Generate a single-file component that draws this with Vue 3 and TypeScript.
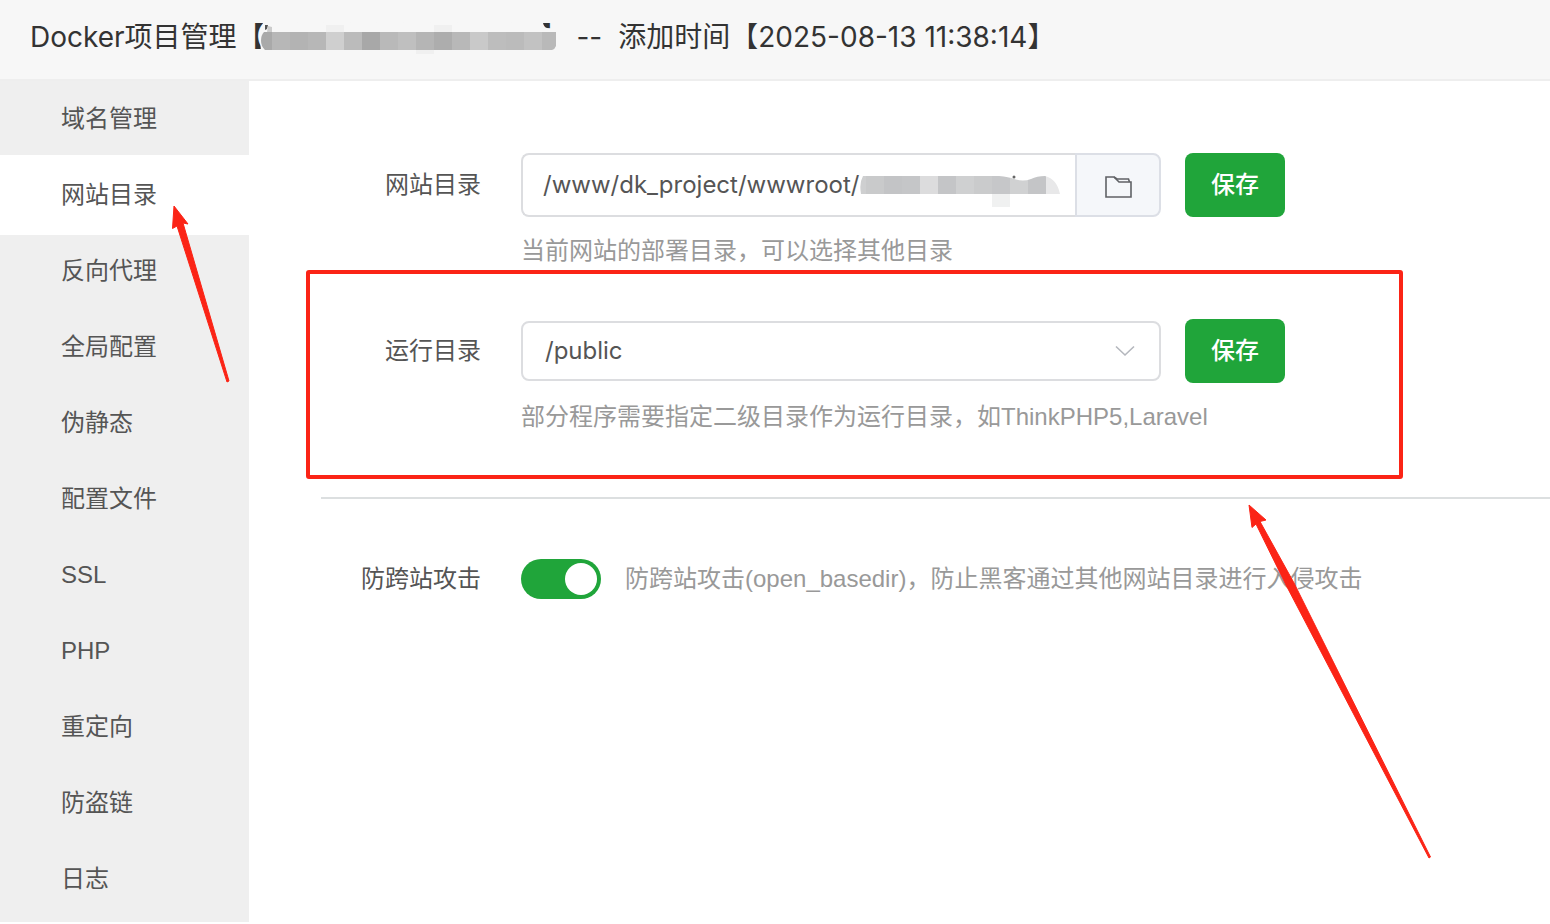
<script setup lang="ts">
import { ref } from 'vue'

interface Block {
  x: number
  w: number
  fill: string
}

const menu: string[] = [
  '域名管理', '网站目录', '反向代理', '全局配置', '伪静态', '配置文件',
  'SSL', 'PHP', '重定向', '防盗链', '日志',
]
const active = ref('网站目录')
const sitePath = ref('/www/dk_project/wwwroot/')
const runDir = ref('/public')
const guard = ref(true)

const toBlocks = (start: number, size: number, fills: string[]): Block[] =>
  fills.map((fill, i) => ({ x: start + i * size, w: size, fill }))

const nameBlocks = toBlocks(-5, 18, [
  '#a9a9a9', '#b7b7b7', '#b3b3b3', '#b7b7b7', '#cfcfcf', '#bbbbbb', '#a8a8a8', '#b9b9b9', '#bfbfbf',
  '#b5b5b5', '#adadad', '#b8b8b8', '#c9c9c9', '#bdbdbd', '#bbbbbb', '#c2c2c2', '#b9b9b9',
])
const pathBlocks = toBlocks(7, 18, [
  '#c9cacb', '#c3c4c6', '#c5c6c8', '#dcdcdd', '#c4c5c7', '#cfd0d1',
  '#cacbcc', '#c6c7c9', '#d0d1d2', '#c4c5c7', '#e8e8e9',
])
</script>

<template>
  <div class="page">
    <header class="header">
      <h1 class="title">
        <span>Docker项目管理【</span>
        <span class="redacted">
          <svg class="mosaic" width="304" height="36" viewBox="0 0 304 36" aria-hidden="true">
            <defs>
              <clipPath id="name-clip">
                <path d="M5 11H297V25Q296 28 293 29H6Q2 25 2 20Q2 14 5 11Z" />
              </clipPath>
            </defs>
            <path d="M4 2L12 2L284 1Q284 6 288 7L304 8V36H4Q-2 19 4 2Z" fill="#f7f7f7" />
            <path d="M67 4h18v7H67zM175 4h18v7h-18zM157 29h18v4h-18z" fill="#f0f0f0" />
            <path d="M6 4h3l-1 4-2 1z" fill="#555" />
            <path d="M9 5l4 1v5H8z" fill="#ccc" />
            <g clip-path="url(#name-clip)">
              <rect v-for="b in nameBlocks" :key="b.x" :x="b.x" y="11" :width="b.w" height="18" :fill="b.fill" />
            </g>
          </svg>
        </span>
        <span>】 --</span>
        <span class="added">添加时间【2025-08-13 11:38:14】</span>
      </h1>
    </header>

    <div class="body">
      <nav class="sidebar">
        <button
          v-for="item in menu"
          :key="item"
          type="button"
          class="menu-item"
          :class="{ active: item === active }"
          @click="active = item"
        >{{ item }}</button>
      </nav>

      <main class="content">
        <div class="row">
          <label class="label" for="site-path">网站目录</label>
          <div class="group">
            <input id="site-path" v-model="sitePath" class="path-input" type="text" />
            <svg class="path-mosaic" width="204" height="36" viewBox="0 0 204 36" aria-hidden="true">
              <defs>
                <clipPath id="path-clip">
                  <path d="M4 3H140Q150 4 155 6Q164 9 172 6Q178 3 186 3Q198 6 201 21H2Q0 10 4 3Z" />
                </clipPath>
              </defs>
              <path d="M133 21h18v13h-18z" fill="#f0f1f1" />
              <g clip-path="url(#path-clip)">
                <rect x="0" y="3" width="7" height="18" fill="#cecfd0" />
                <rect v-for="b in pathBlocks" :key="b.x" :x="b.x" y="3" :width="b.w" height="18" :fill="b.fill" />
              </g>
              <circle cx="155" cy="4" r="1.5" fill="#666" />
            </svg>
            <button type="button" class="folder" aria-label="选择目录">
              <svg width="28" height="24" viewBox="0 0 28 24" fill="none" stroke="#606266" stroke-width="1.6">
                <path d="M2 2H10L15 7H27V22H2Z" />
                <path d="M10 2L13 4H24.500L25.500 7" />
              </svg>
            </button>
          </div>
          <button type="button" class="save">保存</button>
        </div>
        <p class="hint below">当前网站的部署目录，可以选择其他目录</p>

        <div class="row second">
          <label class="label" for="run-dir">运行目录</label>
          <div class="select-wrap">
            <select id="run-dir" v-model="runDir" class="select">
              <option>/public</option>
            </select>
            <svg class="chevron" width="20" height="12" viewBox="0 0 20 12" fill="none" stroke="#b4b7bd" stroke-width="1.6">
              <path d="M1 1.500L10 10L19 1.500" />
            </svg>
          </div>
          <button type="button" class="save">保存</button>
        </div>
        <p class="hint below">部分程序需要指定二级目录作为运行目录，如ThinkPHP5,Laravel</p>

        <hr class="divider" />

        <div class="row">
          <label class="label" for="guard">防跨站攻击</label>
          <input id="guard" v-model="guard" class="switch" type="checkbox" />
          <span class="hint">防跨站攻击(open_basedir)，防止黑客通过其他网站目录进行入侵攻击</span>
        </div>
      </main>
    </div>

    <svg class="annotations" aria-hidden="true">
      <rect x="308" y="272" width="1093" height="205" rx="1" fill="none" stroke="#fb2416" stroke-width="4" />
      <g fill="#fb2416" stroke="#fb2416" stroke-width="1" stroke-linejoin="round">
        <path d="M174 206L188 224L183 223L229 381L227 382L177 226L172.500 228.500Z" />
        <path d="M1249 505L1266 520L1260 521.500L1294 583L1430.500 857L1429 858L1286 585L1256 524L1252 527.500Z" />
      </g>
    </svg>
  </div>
</template>

<style>
body {
  margin: 0;
  background: #fff;
}
</style>

<style scoped>
.page {
  position: relative;
  display: flex;
  flex-direction: column;
  box-sizing: border-box;
  min-height: 100vh;
  padding-bottom: 2px;
  overflow: hidden;
  color: #555;
  font-family: "Liberation Sans", "Noto Sans CJK SC", sans-serif;
  font-size: 24px;
  line-height: 32px;
}
button,
input,
select {
  box-sizing: border-box;
  margin: 0;
  font: inherit;
}
.header {
  padding: 17px 30px 22px;
  border-bottom: 2px solid #eee;
  background: #f7f7f7;
}
.title {
  display: flex;
  margin: 0;
  color: #333;
  font-family: Inter, "Noto Sans CJK SC", sans-serif;
  font-size: 28px;
  font-weight: 400;
  line-height: 40px;
  white-space: pre;
}
.redacted {
  position: relative;
  width: 276px;
}
.mosaic {
  position: absolute;
  top: 4px;
  left: -6px;
}
.added {
  margin-left: 16px;
}
.body {
  display: flex;
  flex: 1;
}
.sidebar {
  display: flex;
  flex: none;
  flex-direction: column;
  width: 249px;
  background: #efefef;
}
.menu-item {
  height: 76px;
  padding: 0 0 0 61px;
  border: 0;
  background: transparent;
  color: #555;
  text-align: left;
}
.menu-item.active {
  height: 80px;
  margin: -2px 0;
  background: #fff;
}
.content {
  flex: 1;
  padding: 72px 0 0 72px;
}
.row {
  display: flex;
  align-items: center;
}
.label {
  flex: none;
  width: 160px;
  margin-right: 40px;
  color: #555;
  text-align: right;
}
.group {
  position: relative;
  display: flex;
  width: 640px;
  height: 64px;
}
.path-input {
  flex: 1;
  min-width: 0;
  padding: 0 20px;
  border: 2px solid #dcdde0;
  border-right: 0;
  border-radius: 8px 0 0 8px;
  background: #fff;
  color: #555;
  font-family: Inter, "Noto Sans CJK SC", sans-serif;
}
.path-mosaic {
  position: absolute;
  top: 20px;
  left: 338px;
}
.folder {
  display: flex;
  align-items: center;
  justify-content: center;
  width: 86px;
  padding: 4px 0 0;
  border: 2px solid #dcdfe6;
  border-radius: 0 8px 8px 0;
  background: #f5f7fa;
}
.save {
  width: 100px;
  height: 64px;
  margin-left: 24px;
  padding: 0;
  border: 0;
  border-radius: 8px;
  background: #20a53a;
  color: #fff;
  font-weight: 500;
}
.hint {
  margin: 0;
  color: #999;
}
.below {
  margin: 18px 0 0 200px;
}
.second {
  margin-top: 52px;
}
.select-wrap {
  position: relative;
  width: 640px;
}
.select {
  width: 100%;
  height: 60px;
  padding: 0 22px;
  border: 2px solid #dcdde0;
  border-radius: 8px;
  appearance: none;
  background: #fff;
  color: #555;
  font-family: Inter, "Noto Sans CJK SC", sans-serif;
}
.chevron {
  position: absolute;
  top: 24px;
  right: 26px;
  pointer-events: none;
}
.divider {
  height: 2px;
  margin: 64px 0 60px;
  border: 0;
  background: #dcdfe0;
}
.switch {
  width: 80px;
  height: 40px;
  margin-right: 24px;
  border-radius: 20px;
  appearance: none;
  background: #ccc;
}
.switch::before {
  display: block;
  width: 32px;
  height: 32px;
  margin: 4px;
  border-radius: 50%;
  background: #fff;
  content: "";
}
.switch:checked {
  background: #20a53a;
}
.switch:checked::before {
  margin-left: 44px;
}
.annotations {
  position: absolute;
  inset: 0;
  width: 100%;
  height: 100%;
  pointer-events: none;
}
</style>
